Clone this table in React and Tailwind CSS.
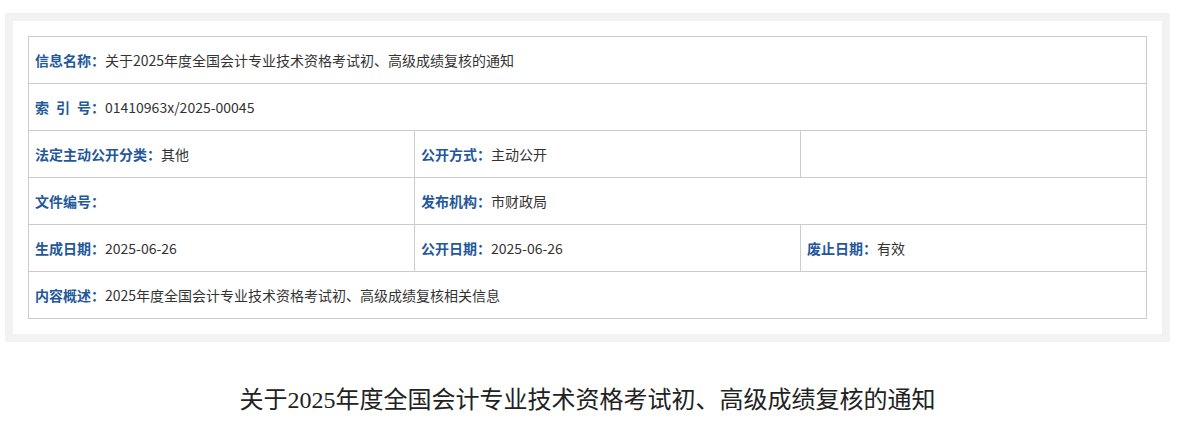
import React from "react";

const label = "font-bold text-[#24589a]";
const cell = "flex items-center px-[6px] border-r border-b border-[#cccccc] h-[47px] text-[14px] text-[#333333]";

function Field({ name, value, span = "" }) {
  return (
    <div className={`${cell} ${span}`}>
      <span className={label}>{name}</span>
      <span>{value}</span>
    </div>
  );
}

export default function App() {
  return (
    <div className="min-h-screen bg-white pt-[13px]" style={{ fontFamily: '"Noto Sans CJK SC", "Noto Sans", sans-serif' }}>
      <div className="ml-[5px] w-[1165px]">
        {/* info box */}
        <div className="border-[8px] border-[#f2f2f2] p-[15px]">
          <div className="grid grid-cols-[386px_386px_346px] border-l border-t border-[#cccccc]">
            <Field span="col-span-3" name="信息名称：" value="关于2025年度全国会计专业技术资格考试初、高级成绩复核的通知" />
            <Field span="col-span-3" name={"索\u2002引\u2002号："} value="01410963x/2025-00045" />
            <Field name="法定主动公开分类：" value="其他" />
            <Field name="公开方式：" value="主动公开" />
            <div className={cell} />
            <Field name="文件编号：" value="" />
            <Field span="col-span-2" name="发布机构：" value="市财政局" />
            <Field name="生成日期：" value="2025-06-26" />
            <Field name="公开日期：" value="2025-06-26" />
            <Field name="废止日期：" value="有效" />
            <Field span="col-span-3" name="内容概述：" value="2025年度全国会计专业技术资格考试初、高级成绩复核相关信息" />
          </div>
        </div>

        <h1
          className="mt-[42px] text-center text-[24px] leading-[32px] text-[#222222]"
          style={{ fontFamily: '"Liberation Serif", "Noto Sans CJK SC", serif' }}
        >
          关于2025年度全国会计专业技术资格考试初、高级成绩复核的通知
        </h1>
      </div>
    </div>
  );
}
